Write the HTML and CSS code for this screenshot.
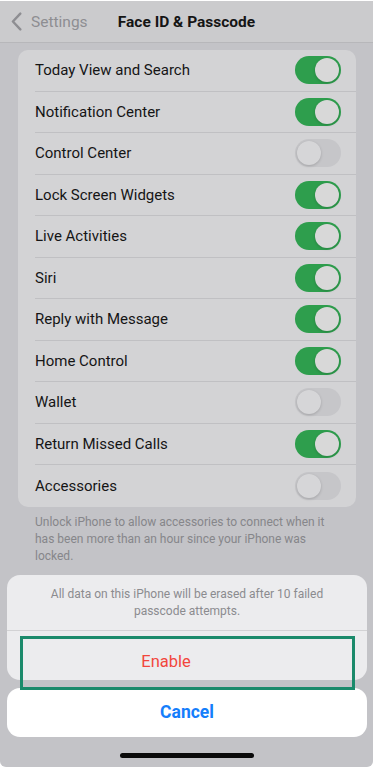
FILE: index.html
```html
<!DOCTYPE html>
<html>
<head>
<meta charset="utf-8">
<link rel="stylesheet" href="styles.css">
</head>
<body>
<div class="screen">
  <header class="nav">
    <div class="back">
      <svg class="chev" width="11" height="19" viewBox="0 0 11 19"><path d="M9.3 1.6 L1.9 9.5 L9.3 17.4" fill="none" stroke="#8e8e92" stroke-width="2.4" stroke-linecap="round" stroke-linejoin="round"/></svg>
      <span>Settings</span>
    </div>
    <div class="title">Face ID &amp; Passcode</div>
  </header>

  <section class="card">
    <div class="row"><span>Today View and Search</span><i class="tg on"></i></div>
    <div class="row"><span>Notification Center</span><i class="tg on"></i></div>
    <div class="row"><span>Control Center</span><i class="tg"></i></div>
    <div class="row"><span>Lock Screen Widgets</span><i class="tg on"></i></div>
    <div class="row"><span>Live Activities</span><i class="tg on"></i></div>
    <div class="row"><span>Siri</span><i class="tg on"></i></div>
    <div class="row"><span>Reply with Message</span><i class="tg on"></i></div>
    <div class="row"><span>Home Control</span><i class="tg on"></i></div>
    <div class="row"><span>Wallet</span><i class="tg"></i></div>
    <div class="row"><span>Return Missed Calls</span><i class="tg on"></i></div>
    <div class="row"><span>Accessories</span><i class="tg"></i></div>
  </section>
  <p class="foot">Unlock iPhone to allow accessories to connect when it has been more than an hour since your iPhone was locked.</p>

  <div class="sheet">
    <div class="msg">All data on this iPhone will be erased after 10 failed passcode attempts.</div>
    <div class="enable">Enable</div>
    <div class="highlight"></div>
  </div>
  <div class="cancel">Cancel</div>
  <div class="home"></div>
</div>
</body>
</html>
```

FILE: styles.css
```css
* { box-sizing: border-box; }
html, body { margin: 0; padding: 0; background: #ffffff; }
body { font-family: Roboto, "Noto Sans", sans-serif; }
.screen {
  position: relative;
  width: 373px;
  height: 766px;
  margin-top: 1px;
  background: #c3c3c7;
  border-radius: 0 0 6px 6px;
  overflow: hidden;
  display: flex;
  flex-direction: column;
}
.nav {
  position: relative;
  height: 42px;
  background: #cbcbcd;
  border-bottom: 1px solid #b7b7ba;
  display: flex;
  align-items: center;
  flex-shrink: 0;
}
.back {
  display: flex;
  align-items: center;
  gap: 9px;
  padding-left: 11px;
  color: #8e8e92;
  font-size: 15.5px;
}
.title {
  position: absolute;
  left: 0; right: 0;
  text-align: center;
  font-weight: 700;
  font-size: 15.5px;
  color: #151515;
  pointer-events: none;
}
.card {
  margin: 7px 17px 0 18px;
  background: #d3d3d5;
  border-radius: 10px;
  display: flex;
  flex-direction: column;
}
.row {
  height: 41.5px;
  margin-left: 17px;
  padding-right: 15px;
  display: flex;
  align-items: center;
  justify-content: space-between;
  font-size: 15px;
  color: #151515;
  border-bottom: 1px solid #c0c0c3;
}
.row:last-child { border-bottom: none; }
.tg {
  position: relative;
  width: 46px;
  height: 28px;
  border-radius: 14px;
  background: #c6c6c9;
  flex-shrink: 0;
}
.tg::after {
  content: "";
  position: absolute;
  top: 2px; left: 2px;
  width: 24px; height: 24px;
  border-radius: 50%;
  background: #d6d6d8;
  box-shadow: 0 1px 3px rgba(0,0,0,0.18);
}
.tg.on { background: #2e9e4d; }
.tg.on::after { left: 20px; background: #d8d8d8; }
.foot {
  margin: 7px 40px 0 35px;
  font-size: 12px;
  line-height: 17px;
  color: #86868a;
}
.sheet {
  position: relative;
  margin: 10px 6px 0 7px;
  background: #ececee;
  border-radius: 13px;
  display: flex;
  flex-direction: column;
}
.msg {
  padding: 11px 30px 0;
  height: 56px;
  text-align: center;
  font-size: 12px;
  line-height: 17px;
  color: #8b8b8f;
  border-bottom: 1px solid #d2d2d4;
}
.enable {
  height: 49px;
  display: flex;
  align-items: center;
  justify-content: center;
  padding-top: 12px;
  padding-right: 42px;
  font-size: 16.5px;
  color: #f2463c;
}
.highlight {
  position: absolute;
  left: 13px;
  top: 61px;
  width: 335px;
  height: 54px;
  border: 3px solid #1b8a6b;
}
.cancel {
  margin: 8px 6px 0 7px;
  height: 49px;
  background: #ffffff;
  border-radius: 13px;
  display: flex;
  align-items: center;
  justify-content: center;
  font-size: 17.5px;
  font-weight: 700;
  color: #157efb;
}
.home {
  margin: 16px auto 0;
  width: 134px;
  height: 5px;
  border-radius: 3px;
  background: #0a0a0a;
}
```
